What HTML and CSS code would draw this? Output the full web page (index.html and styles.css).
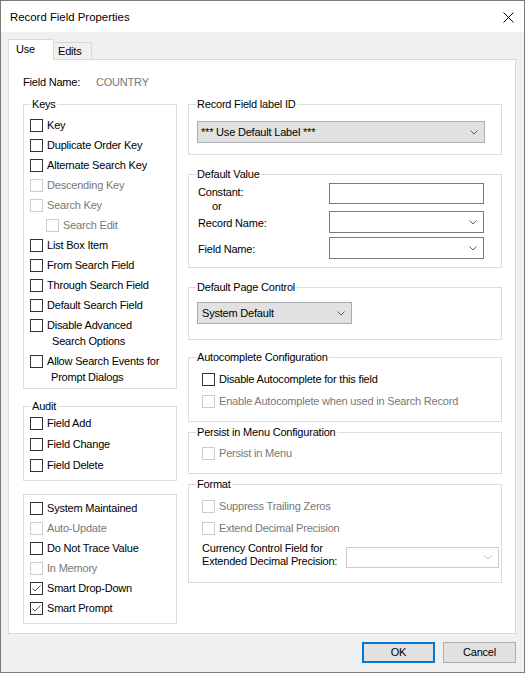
FILE: index.html
```html
<!DOCTYPE html>
<html>
<head>
<meta charset="utf-8">
<link rel="stylesheet" href="styles.css">
</head>
<body>
<div class="window">
  <div class="titlebar">
    <span class="title">Record Field Properties</span>
    <svg class="close" width="11" height="11" viewBox="0 0 11 11"><path d="M0.5 0.5L10.5 10.5M10.5 0.5L0.5 10.5" stroke="#000" stroke-width="1" fill="none"/></svg>
  </div>
  <div class="client">
    <div class="tabs">
      <div class="tab active">Use</div>
      <div class="tab inactive">Edits</div>
    </div>
    <div class="panel">
      <div class="fieldname"><span class="fn-label">Field Name:</span><span class="fn-value">COUNTRY</span></div>
      <div class="columns">
        <div class="col-left">
          <div class="group g-keys">
            <span class="legend">Keys</span>
            <div class="cb"><span class="box"></span><span class="txt">Key</span></div>
            <div class="cb"><span class="box"></span><span class="txt">Duplicate Order Key</span></div>
            <div class="cb"><span class="box"></span><span class="txt">Alternate Search Key</span></div>
            <div class="cb dis"><span class="box"></span><span class="txt">Descending Key</span></div>
            <div class="cb dis"><span class="box"></span><span class="txt">Search Key</span></div>
            <div class="cb dis indent"><span class="box"></span><span class="txt">Search Edit</span></div>
            <div class="cb"><span class="box"></span><span class="txt">List Box Item</span></div>
            <div class="cb"><span class="box"></span><span class="txt">From Search Field</span></div>
            <div class="cb"><span class="box"></span><span class="txt">Through Search Field</span></div>
            <div class="cb"><span class="box"></span><span class="txt">Default Search Field</span></div>
            <div class="cb two"><span class="box"></span><span class="txt">Disable Advanced<span class="l2 i5">Search Options</span></span></div>
            <div class="cb two"><span class="box"></span><span class="txt">Allow Search Events for<span class="l2 i4">Prompt Dialogs</span></span></div>
          </div>
          <div class="group g-audit">
            <span class="legend">Audit</span>
            <div class="cb r21"><span class="box"></span><span class="txt">Field Add</span></div>
            <div class="cb r21"><span class="box"></span><span class="txt">Field Change</span></div>
            <div class="cb r21"><span class="box"></span><span class="txt">Field Delete</span></div>
          </div>
          <div class="group g-misc">
            <div class="cb"><span class="box"></span><span class="txt">System Maintained</span></div>
            <div class="cb dis"><span class="box"></span><span class="txt">Auto-Update</span></div>
            <div class="cb"><span class="box"></span><span class="txt">Do Not Trace Value</span></div>
            <div class="cb dis"><span class="box"></span><span class="txt">In Memory</span></div>
            <div class="cb"><span class="box"><svg class="check" width="11" height="11" viewBox="0 0 11 11"><path d="M1.5 5.5L4 8L9.5 2.5" stroke="#555" stroke-width="1" fill="none"/></svg></span><span class="txt">Smart Drop-Down</span></div>
            <div class="cb"><span class="box"><svg class="check" width="11" height="11" viewBox="0 0 11 11"><path d="M1.5 5.5L4 8L9.5 2.5" stroke="#555" stroke-width="1" fill="none"/></svg></span><span class="txt">Smart Prompt</span></div>
          </div>
        </div>
        <div class="col-right">
          <div class="group g-label">
            <span class="legend">Record Field label ID</span>
            <div class="combo gray w-wide"><span>*** Use Default Label ***</span><svg class="chev" width="8" height="5" viewBox="0 0 8 5"><path d="M0.5 0.5L4 4L7.5 0.5" stroke="#606060" fill="none"/></svg></div>
          </div>
          <div class="group g-dv">
            <span class="legend">Default Value</span>
            <div class="dv-row first">
              <div class="dv-label"><span class="line">Constant:</span><span class="line or">or</span></div>
              <div class="textbox"></div>
            </div>
            <div class="dv-row">
              <div class="dv-label">Record Name:</div>
              <div class="combo white"><span></span><svg class="chev" width="8" height="5" viewBox="0 0 8 5"><path d="M0.5 0.5L4 4L7.5 0.5" stroke="#606060" fill="none"/></svg></div>
            </div>
            <div class="dv-row gap">
              <div class="dv-label">Field Name:</div>
              <div class="combo white"><span></span><svg class="chev" width="8" height="5" viewBox="0 0 8 5"><path d="M0.5 0.5L4 4L7.5 0.5" stroke="#606060" fill="none"/></svg></div>
            </div>
          </div>
          <div class="group g-pc">
            <span class="legend">Default Page Control</span>
            <div class="combo gray w-short"><span>System Default</span><svg class="chev" width="8" height="5" viewBox="0 0 8 5"><path d="M0.5 0.5L4 4L7.5 0.5" stroke="#606060" fill="none"/></svg></div>
          </div>
          <div class="group g-ac">
            <span class="legend">Autocomplete Configuration</span>
            <div class="cb r22"><span class="box"></span><span class="txt">Disable Autocomplete for this field</span></div>
            <div class="cb r22 dis"><span class="box"></span><span class="txt">Enable Autocomplete when used in Search Record</span></div>
          </div>
          <div class="group g-ps">
            <span class="legend">Persist in Menu Configuration</span>
            <div class="cb dis"><span class="box"></span><span class="txt">Persist in Menu</span></div>
          </div>
          <div class="group g-fm">
            <span class="legend">Format</span>
            <div class="cb r22 dis"><span class="box"></span><span class="txt">Suppress Trailing Zeros</span></div>
            <div class="cb r22 dis"><span class="box"></span><span class="txt">Extend Decimal Precision</span></div>
            <div class="cur-row">
              <div class="cur-label">Currency Control Field for<br>Extended Decimal Precision:</div>
              <div class="combo disabled"><span></span><svg class="chev" width="8" height="5" viewBox="0 0 8 5"><path d="M0.5 0.5L4 4L7.5 0.5" stroke="#bfbfbf" fill="none"/></svg></div>
            </div>
          </div>
        </div>
      </div>
    </div>
    <div class="buttons">
      <button class="btn default">OK</button>
      <button class="btn">Cancel</button>
    </div>
  </div>
</div>
</body>
</html>
```

FILE: styles.css
```css
body {
  margin: 0;
  font-family: "Liberation Sans", Arial, sans-serif;
  font-size: 11px;
  letter-spacing: -0.2px;
  color: #000;
  background: #fff;
}

.window {
  width: 525px;
  height: 673px;
  box-sizing: border-box;
  border: 1px solid #7a7a7a;
  display: flex;
  flex-direction: column;
  background: #f0f0f0;
}

.titlebar {
  flex: none;
  height: 31px;
  background: #fff;
  display: flex;
  align-items: center;
  justify-content: space-between;
  padding: 0 10px 0 9px;
}

.title {
  font-size: 11.4px;
  letter-spacing: 0;
}

.close {
  display: block;
  margin-top: 1px;
}

.client {
  flex: 1;
  display: flex;
  flex-direction: column;
  padding: 7px 8px 0 7px;
}

.tabs {
  display: flex;
  align-items: flex-end;
  height: 20px;
  position: relative;
  z-index: 1;
}

.tab {
  box-sizing: border-box;
  border: 1px solid #d9d9d9;
  border-bottom: none;
}

.tab.active {
  width: 46px;
  height: 21px;
  margin-bottom: -1px;
  background: #fff;
  padding-left: 7px;
  line-height: 18px;
}

.tab.inactive {
  width: 38px;
  height: 17px;
  border-left: none;
  padding-left: 4px;
  line-height: 16px;
}

.panel {
  flex: none;
  width: 508px;
  height: 575px;
  box-sizing: border-box;
  border: 1px solid #d9d9d9;
  background: #fff;
  padding: 15px 0 0 14px;
}

.fieldname {
  display: flex;
  line-height: 14px;
  height: 14px;
}

.fn-label {
  width: 73px;
}

.fn-value {
  color: #787878;
}

.columns {
  display: flex;
  gap: 11px;
  margin-top: 15px;
}

.col-left {
  width: 154px;
  display: flex;
  flex-direction: column;
}

.col-right {
  width: 314px;
  display: flex;
  flex-direction: column;
}

.group {
  position: relative;
  box-sizing: border-box;
  border: 1px solid #dcdcdc;
}

.legend {
  position: absolute;
  top: -8px;
  left: 7px;
  padding: 0 1px;
  background: #fff;
  line-height: 14px;
  white-space: nowrap;
}

/* checkbox rows */
.cb {
  display: flex;
  align-items: flex-start;
  height: 20px;
  white-space: nowrap;
}

.cb .box {
  flex: none;
  width: 13px;
  height: 13px;
  box-sizing: border-box;
  border: 1px solid #333;
  background: #fff;
  margin-top: 4px;
  margin-right: 4px;
  position: relative;
}

.cb .check {
  display: block;
  position: absolute;
  left: 0;
  top: 0;
}

.cb .txt {
  line-height: 16px;
  padding-top: 2px;
}

.cb .l2 {
  display: block;
}

.cb .i5 { padding-left: 5px; }
.cb .i4 { padding-left: 4px; }

.cb.two {
  height: 36px;
}

.cb.r21 { height: 21px; }

.cb.r22 { height: 22px; }
.cb.r22 .box { margin-top: 5px; }
.cb.r22 .txt { padding-top: 3px; }

.cb.dis .box { border-color: #cccccc; }
.cb.dis .txt { color: #787878; }

.cb.indent { padding-left: 16px; }

/* left groups */
.g-keys {
  height: 285px;
  padding: 10px 0 0 6px;
}

.g-audit {
  height: 75px;
  margin-top: 17px;
  padding: 6px 0 0 6px;
}

.g-misc {
  height: 130px;
  margin-top: 13px;
  padding: 3px 0 0 6px;
}

/* combos */
.combo {
  box-sizing: border-box;
  height: 22px;
  display: flex;
  align-items: center;
  justify-content: space-between;
  padding: 0 6px 0 3px;
  border: 1px solid #adadad;
  line-height: 14px;
}

.combo .chev { display: block; flex: none; }

.combo.gray { background: #e1e1e1; }
.combo.white { background: #fff; border-color: #7a7a7a; width: 155px; }
.combo.disabled { background: #fff; border-color: #cccccc; width: 153px; height: 21px; }

.w-wide { width: 288px; }
.w-short { width: 155px; padding-left: 4px; }

.textbox {
  box-sizing: border-box;
  width: 155px;
  height: 21px;
  border: 1px solid #7a7a7a;
  background: #fff;
}

/* right groups */
.g-label {
  height: 51px;
  padding: 16px 0 0 8px;
}

.g-dv {
  height: 94px;
  margin-top: 19px;
  padding: 8px 0 0 9px;
}

.dv-row {
  display: flex;
  align-items: center;
  height: 22px;
}

.dv-row.first {
  height: 28px;
  align-items: flex-start;
}

.dv-row.gap { margin-top: 4px; }

.dv-label {
  width: 131px;
  line-height: 14px;
  padding-top: 2px;
}

.dv-label .line { display: block; }
.dv-label .or { padding-left: 14px; }

.g-pc {
  height: 53px;
  margin-top: 19px;
  padding: 14px 0 0 8px;
}

.g-ac {
  height: 65px;
  margin-top: 17px;
  padding: 10px 0 0 13px;
}

.g-ps {
  height: 42px;
  margin-top: 10px;
  padding: 10px 0 0 13px;
}

.g-fm {
  height: 99px;
  margin-top: 10px;
  padding: 10px 0 0 13px;
}

.cur-row {
  display: flex;
  align-items: flex-start;
}

.cur-label {
  width: 144px;
  line-height: 13px;
  padding-top: 3px;
  white-space: nowrap;
}

.cur-row .combo {
  margin-top: 8px;
}

/* buttons */
.buttons {
  display: flex;
  justify-content: flex-end;
  gap: 8px;
  margin-top: 8px;
}

.btn {
  box-sizing: border-box;
  width: 73px;
  height: 21px;
  margin: 0;
  padding: 0;
  border: 1px solid #adadad;
  background: #e1e1e1;
  font-family: "Liberation Sans", Arial, sans-serif;
  font-size: 11px;
  letter-spacing: -0.2px;
  color: #000;
  line-height: 19px;
}

.btn.default {
  border: 2px solid #0078d7;
  line-height: 17px;
}
```
